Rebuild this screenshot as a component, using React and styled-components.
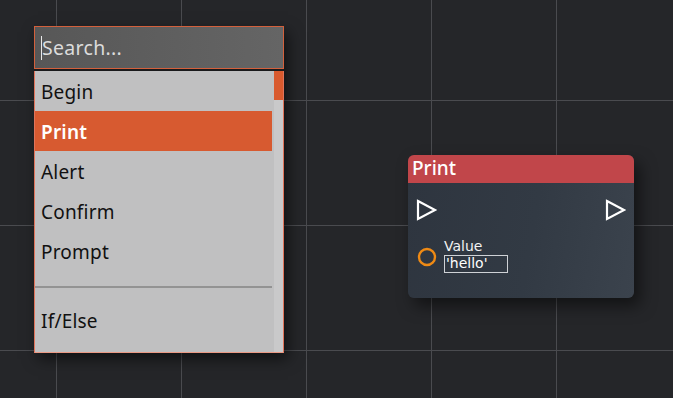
import React from "react";
import styled, { createGlobalStyle } from "styled-components";

const Global = createGlobalStyle`
  html, body { margin: 0; padding: 0; }
  body {
    width: 673px; height: 398px; overflow: hidden;
    background: #252629;
    font-family: "Noto Sans", "Open Sans", "DejaVu Sans", sans-serif;
  }
`;

const Canvas = styled.div`
  position: relative;
  width: 673px;
  height: 398px;
  background-color: #252629;
  background-image:
    linear-gradient(to right, #4a4b4f 1px, transparent 1px),
    linear-gradient(to bottom, #4a4b4f 1px, transparent 1px);
  background-size: 125px 125px;
  background-position: 56px 100px;
  overflow: hidden;
`;

const Menu = styled.div`
  position: absolute;
  left: 34px;
  top: 26px;
  width: 250px;
  display: flex;
  flex-direction: column;
  box-shadow: 4px 6px 14px rgba(0, 0, 0, 0.55);
`;

const SearchBox = styled.div`
  box-sizing: border-box;
  height: 43px;
  border: 1px solid #d3603c;
  background: linear-gradient(to right, #575757, #656565);
  display: flex;
  align-items: center;
  padding-left: 6px;
  font-size: 19.5px;
  letter-spacing: 0.3px;
  color: #dcdcdc;
`;

const Caret = styled.span`
  display: inline-block;
  width: 1px;
  height: 24px;
  background: #e8e8e8;
`;

const Divider = styled.div`
  height: 2px;
  background: #1a1a1c;
`;

const ListFrame = styled.div`
  box-sizing: border-box;
  height: 282px;
  display: flex;
  border: 1px solid #e0735a;
  border-top: none;
  border-bottom-color: #eb9a85;
  background: #c0c0c1;
  overflow: hidden;
`;

const Items = styled.div`
  flex: 1;
  display: flex;
  flex-direction: column;
  padding-right: 2px;
`;

const Item = styled.div`
  box-sizing: border-box;
  height: 40px;
  flex: none;
  display: flex;
  align-items: center;
  padding: 2px 0 0 6px;
  font-size: 19px;
  letter-spacing: 0.2px;
  color: ${(p) => (p.$active ? "#ffffff" : "#111111")};
  background: ${(p) => (p.$active ? "#d75a30" : "transparent")};
  font-weight: ${(p) => (p.$active ? 600 : 400)};
`;

const Separator = styled.div`
  height: 29px;
  flex: none;
  display: flex;
  align-items: center;
  &::after {
    content: "";
    flex: 1;
    height: 2px;
    background: #939393;
    margin-top: 2px;
  }
`;

const Scrollbar = styled.div`
  width: 9px;
  flex: none;
  background: #c9c9ca;
  display: flex;
  flex-direction: column;
`;

const Thumb = styled.div`
  height: 29px;
  background: #d95a2e;
`;

const Node = styled.div`
  position: absolute;
  left: 408px;
  top: 155px;
  width: 226px;
  height: 143px;
  border-radius: 6px;
  overflow: hidden;
  display: flex;
  flex-direction: column;
  box-shadow: 6px 8px 16px rgba(0, 0, 0, 0.5);
  background: linear-gradient(100deg, #2e353f 0%, #323a44 55%, #3b434d 100%);
`;

const NodeHeader = styled.div`
  height: 28px;
  flex: none;
  background: #c1464a;
  color: #ffffff;
  font-size: 19px;
  font-weight: 500;
  display: flex;
  align-items: center;
  padding-left: 4px;
  padding-bottom: 2px;
  box-sizing: border-box;
`;

const NodeBody = styled.div`
  display: flex;
  flex-direction: column;
  padding: 16px 7px 0 8px;
`;

const ExecRow = styled.div`
  display: flex;
  justify-content: space-between;
  align-items: center;
  height: 22px;
`;

const InputRow = styled.div`
  display: flex;
  align-items: center;
  margin-top: 17px;
  gap: 6px;
`;

const PinSlot = styled.div`
  display: flex;
  margin-top: 3px;
`;

const Field = styled.div`
  display: flex;
  flex-direction: column;
  color: #ffffff;
  font-family: "DejaVu Sans", "Noto Sans", sans-serif;
`;

const Label = styled.div`
  font-size: 14px;
  line-height: 17px;
  height: 17px;
  color: #f2f2f2;
`;

const ValueBox = styled.div`
  box-sizing: border-box;
  width: 64px;
  height: 18px;
  border: 1.5px solid #cfd2d6;
  font-size: 14px;
  line-height: 15px;
  padding-left: 1px;
  color: #ffffff;
  white-space: nowrap;
`;

const ExecPin = () => (
  <svg width="22" height="22" viewBox="0 0 22 22">
    <polygon points="2,2 19,11 2,20" fill="none" stroke="#ffffff" strokeWidth="2.2" strokeLinejoin="miter" />
  </svg>
);

const DataPin = () => (
  <svg width="22" height="22" viewBox="0 0 22 22">
    <circle cx="11" cy="11" r="8" fill="none" stroke="#ef8a14" strokeWidth="2.4" />
  </svg>
);

export default function App() {
  return (
    <>
      <Global />
      <Canvas>
        <Menu>
          <SearchBox>
            <Caret />
            Search...
          </SearchBox>
          <Divider />
          <ListFrame>
            <Items>
              <Item>Begin</Item>
              <Item $active>Print</Item>
              <Item>Alert</Item>
              <Item>Confirm</Item>
              <Item>Prompt</Item>
              <Separator />
              <Item>If/Else</Item>
            </Items>
            <Scrollbar>
              <Thumb />
            </Scrollbar>
          </ListFrame>
        </Menu>
        <Node>
          <NodeHeader>Print</NodeHeader>
          <NodeBody>
            <ExecRow>
              <ExecPin />
              <ExecPin />
            </ExecRow>
            <InputRow>
              <PinSlot>
                <DataPin />
              </PinSlot>
              <Field>
                <Label>Value</Label>
                <ValueBox>'hello'</ValueBox>
              </Field>
            </InputRow>
          </NodeBody>
        </Node>
      </Canvas>
    </>
  );
}
